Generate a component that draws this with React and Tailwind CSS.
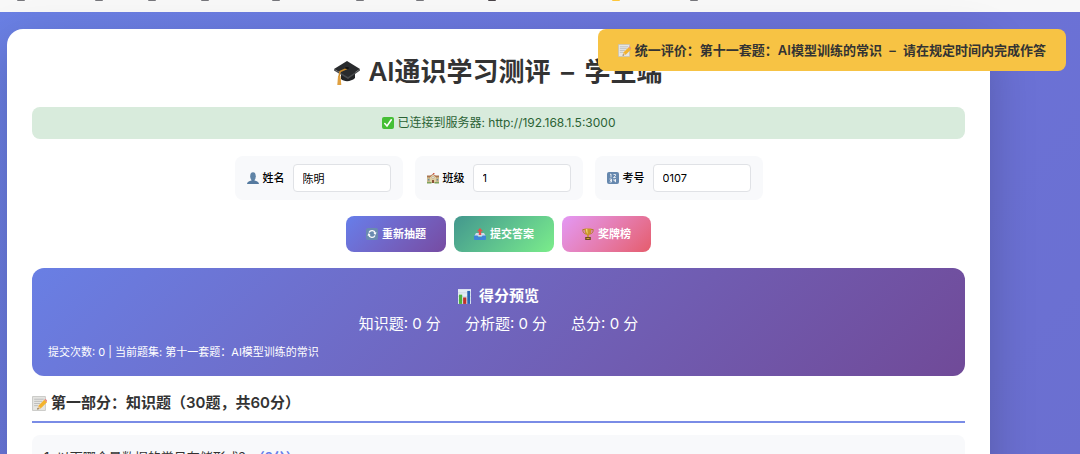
import React from 'react';

const bookmarks = [
  { id: 1, width: 'w-[78px]', color: 'bg-[#77777c]' },
  { id: 2, width: 'w-[53px]', color: 'bg-[#77777c]' },
  { id: 3, width: 'w-[53px]', color: 'bg-[#77777c]' },
  { id: 4, width: 'w-[71px]', color: 'bg-[#77777c]' },
  { id: 5, width: 'w-[84px]', color: 'bg-[#77777c]' },
  { id: 6, width: 'w-[60px]', color: 'bg-[#77777c]' },
  { id: 7, width: 'w-[72px]', color: 'bg-[#77777c]' },
  { id: 8, width: 'w-[124px]', color: 'bg-[#4a4448]' },
  { id: 9, width: 'w-[78px]', color: 'bg-[#ffc83d]' },
  { id: 10, width: 'w-[78px]', color: 'bg-[#77777c]' },
];

const fields = [
  { id: 'name', label: '姓名', value: '陈明', icon: PersonIcon },
  { id: 'class', label: '班级', value: '1', icon: SchoolIcon },
  { id: 'number', label: '考号', value: '0107', icon: NumbersIcon },
];

const scores = ['知识题: 0 分', '分析题: 0 分', '总分: 0 分'];

function CapIcon({ className }) {
  return (
    <svg viewBox="0 0 26 26" className={className} aria-hidden="true">
      <path d="M7 12v8c3 3 10 3 14-1v-8z" fill="#222426" />
      <path d="M13 2 26 10 14 18 0 10z" fill="#292b2d" />
      <path d="M0 10l14 8 12-8v1.500L14 20 0 11.500z" fill="#4a4c4e" />
      <path d="M13 9.500 6 12.500 5 18" fill="none" stroke="#c98a2b" strokeWidth="1.500" />
      <path d="M4 17h2.500l.8 9H3.300z" fill="#e0a040" />
      <ellipse cx="13" cy="9" rx="2" ry="1" fill="#111" />
    </svg>
  );
}

function MemoIcon({ className }) {
  return (
    <svg viewBox="0 0 14 14" className={className} aria-hidden="true">
      <path d="M.5.500h12v13H.5z" fill="#e6e6e3" stroke="#bdbdb9" strokeWidth=".7" />
      <path d="M2 3h9M2 5h7.500M2 7h5.500M2 9h3.500" stroke="#a8a8a8" strokeWidth=".6" />
      <path d="M5 12.500 6 9 11.500 3.500 14 5.800 8.300 11.500z" fill="#f3b32e" />
      <path d="M11.500 3.500 12.500 2.500 14 4v1.800z" fill="#e58b88" />
      <path d="M5 12.500 6 9 8.300 11.500z" fill="#e9c79b" />
      <path d="M5 12.500l.4-1.400 1 1z" fill="#333" />
    </svg>
  );
}

function CheckIcon({ className }) {
  return (
    <svg viewBox="0 0 12 12" className={className} aria-hidden="true">
      <rect width="12" height="12" rx="2" fill="#45bf35" />
      <path d="M2.800 6.500 5 9 9.300 2.800" fill="none" stroke="#fff" strokeWidth="1.600" strokeLinecap="round" />
    </svg>
  );
}

function PersonIcon({ className }) {
  return (
    <svg viewBox="0 0 12 12" className={className} aria-hidden="true">
      <path d="M0 12c0-2 2-2.600 4.500-3.400V7h3v1.600C10 9.400 12 10 12 12z" fill="#557a9f" />
      <ellipse cx="6" cy="4.300" rx="2.800" ry="4" fill="#5f83a6" />
    </svg>
  );
}

function SchoolIcon({ className }) {
  return (
    <svg viewBox="0 0 12 12" className={className} aria-hidden="true">
      <path d="M0 5h12v6H0z" fill="#c9b98c" />
      <path d="M0 3.500h12v1.800H0z" fill="#a9744f" />
      <path d="M3 5 6 2.500 9 5v6H3z" fill="#e0d0a4" />
      <path d="M2.500 5 6 2l3.500 3" fill="none" stroke="#b5694c" strokeWidth=".8" />
      <path d="M6 1h1.500v1H6z" fill="#d9584a" />
      <circle cx="6" cy="5.500" r="1" fill="#fff" stroke="#876" strokeWidth=".4" />
      <path d="M5 8h2v3H5z" fill="#8a5138" />
      <path d="M1 7h1.300v1.500H1zM9.700 7H11v1.500H9.700z" fill="#6a8ca3" />
      <path d="M0 10h4.500v1.500H0zM7.500 10H12v1.500H7.500z" fill="#7fa35c" />
    </svg>
  );
}

function NumbersIcon({ className }) {
  return (
    <svg viewBox="0 0 12 12" className={className} aria-hidden="true">
      <rect width="12" height="12" rx="2" fill="#6688ae" />
      <g fill="none" stroke="#fff" strokeWidth=".8">
        <path d="M3 2.500l1-.5v3.500M6.500 2.500h2v1.300l-2 1.700h2.300" />
        <path d="M2.500 7h2v3h-2M3 8.500h1.500M7 6.800v2h2M8.500 7v3.200" />
      </g>
    </svg>
  );
}

function RefreshIcon({ className }) {
  return (
    <svg viewBox="0 0 12 12" className={className} aria-hidden="true">
      <rect width="12" height="12" rx="2" fill="#6a8bb0" />
      <path d="M2.800 7A3.300 3.300 0 0 0 9 7.500M9.200 5A3.300 3.300 0 0 0 3 4.500" fill="none" stroke="#fff" strokeWidth="1.300" />
      <path d="M1.300 7.500 2.800 5l1.900 2.300zM10.700 4.500 9.200 7 7.300 4.700z" fill="#fff" />
    </svg>
  );
}

function OutboxIcon({ className }) {
  return (
    <svg viewBox="0 0 12 12" className={className} aria-hidden="true">
      <path d="M2 5h8l2 3.500H0z" fill="#cfdcec" />
      <path d="M0 7.500h3.500L4.500 9h3l1-1.500H12V11a1 1 0 0 1-1 1H1a1 1 0 0 1-1-1z" fill="#3f86d8" />
      <path d="M6 0 9 3.200H7.200V7H4.800V3.200H3z" fill="#e3514c" />
    </svg>
  );
}

function TrophyIcon({ className }) {
  return (
    <svg viewBox="0 0 12 12" className={className} aria-hidden="true">
      <path d="M3 1.500H.8C.8 4.500 2 5.500 4 6M9 1.500h2.200C11.200 4.500 10 5.500 8 6" fill="none" stroke="#a87a1c" strokeWidth=".9" />
      <path d="M2.500.5h7c0 4-1 6-2.700 6.800V9H5.200V7.300C3.500 6.500 2.500 4.500 2.500.5z" fill="#c9962a" />
      <path d="M4 1h1.300l.4 5C4.500 5 4 3 4 1z" fill="#f5d878" />
      <path d="M3.200 9h5.600v3H3.200z" fill="#6f4a22" />
      <path d="M4.500 10h3v1h-3z" fill="#d6a531" />
    </svg>
  );
}

function ChartIcon({ className }) {
  return (
    <svg viewBox="0 0 14 16" className={className} aria-hidden="true">
      <path d="M0 0h14v16H0z" fill="#e4ecf4" />
      <path d="M0 4h14M0 8h14M0 12h14" stroke="#bccbda" strokeWidth=".5" />
      <path d="M1 6h3.500v10H1z" fill="#4fb13f" />
      <path d="M5.500 9H9v7H5.500z" fill="#c0302c" />
      <path d="M10 2h3v14h-3z" fill="#2b62b4" />
    </svg>
  );
}

function Dash() {
  return <span className="px-1"> – </span>;
}

export default function StudentAssessment() {
  return (
    <div className="h-screen overflow-hidden flex flex-col bg-linear-135 from-[#6a80e4] via-[#6b73d9] via-50% to-[#6b6fd0] font-[Inter,'Noto_Sans_CJK_SC',sans-serif] text-[#333]">
      {/* Bookmarks bar */}
      <div className="h-3 shrink-0 overflow-hidden bg-[#f8f8f8] pl-[17px]">
        <div className="flex">
          {bookmarks.map((item) => (
            <span key={item.id} className={`${item.width} shrink-0`}>
              <span className={`${item.color} block w-2 h-px rounded-b`} />
            </span>
          ))}
        </div>
      </div>

      {/* Notification */}
      <div className="fixed top-[29px] right-[14px] z-10 flex items-center gap-1 rounded-lg bg-[#f7c344] px-5 py-3 text-[13px] leading-[18px] font-semibold">
        <MemoIcon className="w-[13px] h-[13px]" />
        <span>统一评价：第十一套题：AI模型训练的常识<Dash />请在规定时间内完成作答</span>
      </div>

      {/* Main Card */}
      <main className="mt-[17px] ml-[7px] mr-[90px] shrink-0 rounded-2xl bg-white px-[25px] pt-6 pb-10 shadow-[0_16px_48px_rgba(0,0,0,0.2)]">
        <h1 className="flex items-center justify-center gap-2 text-[26px] leading-[38px] font-semibold">
          <CapIcon className="w-[26px] h-[26px]" />
          <span>AI通识学习测评<Dash />学生端</span>
        </h1>

        <div className="mt-4 flex items-center justify-center gap-1 rounded-lg bg-[#d8ebdc] py-2 text-xs leading-4 text-[#2b6235]">
          <CheckIcon className="w-3 h-3" />
          已连接到服务器: http://192.168.1.5:3000
        </div>

        {/* Student Info */}
        <div className="mt-[17px] flex justify-center gap-3">
          {fields.map(({ id, label, value, icon: Icon }) => (
            <div key={id} className="flex items-center rounded-lg bg-[#f8f9fb] px-3 py-2 text-[11px] text-black">
              <label htmlFor={id} className="flex items-center gap-1 font-medium">
                <Icon className="w-3 h-3" />
                {label}
              </label>
              <input
                id={id}
                type="text"
                defaultValue={value}
                className="ml-2 h-7 w-[98px] rounded border border-[#e0e2e6] bg-white px-[9px] text-[11px]"
              />
            </div>
          ))}
        </div>

        {/* Actions */}
        <div className="mt-4 flex justify-center gap-2 text-[11px] leading-5 font-bold text-white">
          <button className="flex items-center gap-1 rounded-lg bg-linear-135 from-[#667eea] to-[#764ba2] px-5 py-2">
            <RefreshIcon className="w-3 h-3" />
            重新抽题
          </button>
          <button className="flex items-center gap-1 rounded-lg bg-linear-135 from-[#43978d] to-[#7bed8a] px-5 py-2">
            <OutboxIcon className="w-3 h-3" />
            提交答案
          </button>
          <button className="flex items-center gap-1 rounded-lg bg-linear-135 from-[#e398f5] to-[#e55c6c] px-5 py-2">
            <TrophyIcon className="w-3 h-3" />
            奖牌榜
          </button>
        </div>

        {/* Score Preview */}
        <section className="mt-4 rounded-xl bg-linear-135 from-[#697fe4] to-[#704a98] p-4 text-white">
          <h2 className="flex items-center justify-center gap-2 text-[15px] leading-6 font-semibold">
            <ChartIcon className="w-[13px] h-[15px]" />
            得分预览
          </h2>
          <div className="mt-1 flex justify-center gap-6 text-[15px] leading-6">
            {scores.map((score) => (
              <span key={score}>{score}</span>
            ))}
          </div>
          <p className="mt-2 text-[11px] leading-4">
            提交次数: 0 | 当前题集: 第十一套题：AI模型训练的常识
          </p>
        </section>

        {/* Questions */}
        <h2 className="mt-4 flex items-center gap-1 border-b-2 border-[#7a8ce6] pb-[7px] text-[15px] leading-[22px] font-semibold">
          <MemoIcon className="w-[15px] h-[15px]" />
          第一部分：知识题（30题，共60分）
        </h2>
        <div className="mt-3 rounded-lg bg-[#f8f9fb] p-3 text-[13px] leading-5">
          1. 以下哪个是数据的常见存储形式？<span className="font-semibold text-[#667eea]">（2分）</span>
        </div>
      </main>
    </div>
  );
}
